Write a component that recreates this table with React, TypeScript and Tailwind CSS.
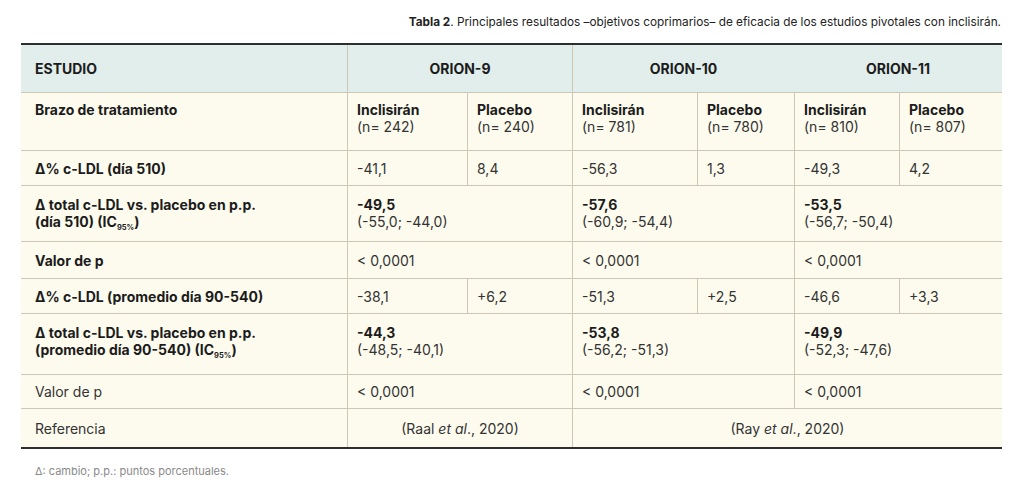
import type { ReactNode } from "react";
import clsx from "clsx";

const line = "border-[#cdc8b6]";

function Cell({
  children,
  className,
  first,
  noLeft,
}: {
  children?: ReactNode;
  className?: string;
  first?: boolean;
  noLeft?: boolean;
}) {
  return (
    <div
      className={clsx(
        "flex border-t",
        line,
        first ? "pl-[14px] pr-2" : "px-[9px]",
        !first && !noLeft && "border-l",
        className
      )}
    >
      {children}
    </div>
  );
}

function Label({ children }: { children: ReactNode }) {
  return <div className="font-bold text-[#1c1c1c]">{children}</div>;
}

function Val({ children }: { children: ReactNode }) {
  return <div className="text-[#333]">{children}</div>;
}

function Arm({ name, n }: { name: string; n: number }) {
  return (
    <div>
      <div className="font-bold text-[#1c1c1c]">{name}</div>
      <div className="text-[#333]">(n= {n})</div>
    </div>
  );
}

function Range({ main, ci }: { main: string; ci: string }) {
  return (
    <div>
      <div className="font-bold text-[#1c1c1c]">{main}</div>
      <div className="text-[#333]">{ci}</div>
    </div>
  );
}

function IC() {
  return (
    <>
      (IC<sub className="text-[7.5px] font-bold bottom-[-3px]">95%</sub>)
    </>
  );
}

export default function App() {
  const single = "items-center";
  const multi10 = "items-start pt-[10px]";
  return (
    <div className="w-[1024px] h-[491px] bg-white font-['Inter','Liberation_Sans',sans-serif] text-[14px] leading-[17px]">
      <div className="pt-[14px] pr-[23px] text-right text-[11.8px] leading-[16px] text-[#222]">
        <span className="font-bold">Tabla 2</span>. Principales resultados –objetivos coprimarios– de eficacia de los
        estudios pivotales con inclisirán.
      </div>

      <div className="ml-[21px] mt-[13px] w-[981px] border-t-2 border-b-2 border-[#2e2e2e]">
        <div className="grid grid-cols-[326px_120px_105px_125px_97px_105px_103px]">
          {/* header */}
          <div className="col-span-7 grid grid-cols-subgrid h-[47px] bg-[#e1eeeb] font-bold text-[#1c1c1c]">
            <div className="flex items-center pl-[14px]">ESTUDIO</div>
            <div className={clsx("col-span-2 flex items-center justify-center border-l", line)}>ORION-9</div>
            <div className={clsx("col-span-2 flex items-center justify-center border-l", line)}>ORION-10</div>
            <div className="col-span-2 flex items-center justify-center">ORION-11</div>
          </div>

          <div className="col-span-7 grid grid-cols-subgrid bg-[#fdfbee]">
            {/* Brazo */}
            <Cell first className="h-[58px] items-start pt-[8px]">
              <Label>Brazo de tratamiento</Label>
            </Cell>
            <Cell className="items-start pt-[8px]">
              <Arm name="Inclisirán" n={242} />
            </Cell>
            <Cell className="items-start pt-[8px]">
              <Arm name="Placebo" n={240} />
            </Cell>
            <Cell className="items-start pt-[8px]">
              <Arm name="Inclisirán" n={781} />
            </Cell>
            <Cell className="items-start pt-[8px]">
              <Arm name="Placebo" n={780} />
            </Cell>
            <Cell className="items-start pt-[8px]">
              <Arm name="Inclisirán" n={810} />
            </Cell>
            <Cell className="items-start pt-[8px]">
              <Arm name="Placebo" n={807} />
            </Cell>

            {/* Δ% día 510 */}
            <Cell first className={clsx("h-[35px]", single)}>
              <Label>Δ% c-LDL (día 510)</Label>
            </Cell>
            <Cell className={single}><Val>-41,1</Val></Cell>
            <Cell className={single}><Val>8,4</Val></Cell>
            <Cell className={single}><Val>-56,3</Val></Cell>
            <Cell className={single}><Val>1,3</Val></Cell>
            <Cell className={single}><Val>-49,3</Val></Cell>
            <Cell className={single}><Val>4,2</Val></Cell>

            {/* Δ total día 510 */}
            <Cell first className={clsx("h-[56px]", multi10)}>
              <Label>
                Δ total c-LDL vs. placebo en p.p.
                <br />
                (día 510) <IC />
              </Label>
            </Cell>
            <Cell className={clsx("col-span-2", multi10)}>
              <Range main="-49,5" ci="(-55,0; -44,0)" />
            </Cell>
            <Cell className={clsx("col-span-2", multi10)}>
              <Range main="-57,6" ci="(-60,9; -54,4)" />
            </Cell>
            <Cell className={clsx("col-span-2", multi10)}>
              <Range main="-53,5" ci="(-56,7; -50,4)" />
            </Cell>

            {/* Valor de p */}
            <Cell first className={clsx("h-[37px]", single)}>
              <Label>Valor de p</Label>
            </Cell>
            <Cell className={clsx("col-span-2", single)}><Val>&lt; 0,0001</Val></Cell>
            <Cell className={clsx("col-span-2", single)}><Val>&lt; 0,0001</Val></Cell>
            <Cell className={clsx("col-span-2", single)}><Val>&lt; 0,0001</Val></Cell>

            {/* Δ% promedio */}
            <Cell first className={clsx("h-[35px]", single)}>
              <Label>Δ% c-LDL (promedio día 90-540)</Label>
            </Cell>
            <Cell className={single}><Val>-38,1</Val></Cell>
            <Cell className={single}><Val>+6,2</Val></Cell>
            <Cell className={single}><Val>-51,3</Val></Cell>
            <Cell className={single}><Val>+2,5</Val></Cell>
            <Cell className={single}><Val>-46,6</Val></Cell>
            <Cell className={single}><Val>+3,3</Val></Cell>

            {/* Δ total promedio */}
            <Cell first className="h-[61px] items-start pt-[10px]">
              <Label>
                Δ total c-LDL vs. placebo en p.p.
                <br />
                (promedio día 90-540) <IC />
              </Label>
            </Cell>
            <Cell className="col-span-2 items-start pt-[10px]">
              <Range main="-44,3" ci="(-48,5; -40,1)" />
            </Cell>
            <Cell className="col-span-2 items-start pt-[10px]">
              <Range main="-53,8" ci="(-56,2; -51,3)" />
            </Cell>
            <Cell className="col-span-2 items-start pt-[10px]">
              <Range main="-49,9" ci="(-52,3; -47,6)" />
            </Cell>

            {/* Valor de p (normal) */}
            <Cell first className={clsx("h-[34px]", single)}>
              <Val>Valor de p</Val>
            </Cell>
            <Cell className={clsx("col-span-2", single)}><Val>&lt; 0,0001</Val></Cell>
            <Cell className={clsx("col-span-2", single)}><Val>&lt; 0,0001</Val></Cell>
            <Cell className={clsx("col-span-2", single)}><Val>&lt; 0,0001</Val></Cell>

            {/* Referencia */}
            <Cell first className={clsx("h-[39px]", single)}>
              <Val>Referencia</Val>
            </Cell>
            <Cell className={clsx("col-span-2 justify-center", single)}>
              <Val>
                (Raal <i>et al</i>., 2020)
              </Val>
            </Cell>
            <Cell className={clsx("col-span-4 justify-center", single)}>
              <Val>
                (Ray <i>et al</i>., 2020)
              </Val>
            </Cell>
          </div>
        </div>
      </div>

      <div className="pl-[35px] mt-[15px] text-[11px] leading-[14px] text-[#8a8a8a]">
        Δ: cambio; p.p.: puntos porcentuales.
      </div>
    </div>
  );
}
